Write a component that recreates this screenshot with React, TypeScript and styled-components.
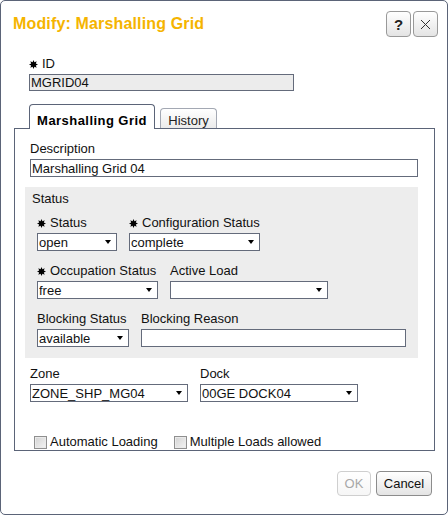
import React from "react";
import styled, { createGlobalStyle, css } from "styled-components";

const Global = createGlobalStyle`
  html, body { margin: 0; padding: 0; background: #ffffff; }
  body { font-family: "Liberation Sans", Arial, sans-serif; font-size: 13px; color: #111; }
  * { box-sizing: border-box; }
`;

const Dialog = styled.div`
  width: 448px;
  height: 515px;
  border: 1px solid #5b6478;
  border-radius: 5px;
  background: #fff;
  display: flex;
  flex-direction: column;
`;

const Header = styled.div`
  display: flex;
  align-items: center;
  justify-content: space-between;
  padding: 10px 9px 0 12px;
`;

const Title = styled.h1`
  margin: 0;
  font-size: 16px;
  letter-spacing: 0.15px;
  line-height: 18px;
  font-weight: bold;
  color: #f5b400;
`;

const HeaderButtons = styled.div`
  display: flex;
  gap: 2px;
`;

const IconButton = styled.button`
  width: 25px;
  height: 26px;
  padding: 0;
  border: 1px solid #999;
  border-radius: 4px;
  background: linear-gradient(#ffffff, #e4e4e4);
  display: flex;
  align-items: center;
  justify-content: center;
  font-family: "Liberation Sans", Arial, sans-serif;
  font-size: 15px;
  font-weight: bold;
  color: #222;
`;

const Content = styled.div`
  display: flex;
  flex-direction: column;
  padding: 0 12px 0 13px;
`;

const IdField = styled.div`
  margin-top: 19px;
  padding-left: 15px;
  display: flex;
  flex-direction: column;
`;

const Field = styled.div<{ $indent?: number }>`
  display: flex;
  flex-direction: column;
  margin-left: ${(p) => p.$indent ?? 0}px;
`;

const Label = styled.label`
  display: flex;
  align-items: center;
  font-size: 13px;
  line-height: 16px;
  height: 16px;
  margin-bottom: 2px;
  color: #111;
  white-space: nowrap;
`;

const StarIcon = styled.svg`
  width: 9px;
  height: 9px;
  margin-right: 4px;
  flex: none;
`;

const TextInput = styled.input<{ $w: number; $h?: number; $gray?: boolean }>`
  width: ${(p) => p.$w}px;
  height: ${(p) => p.$h ?? 18}px;
  border: 1px solid #646b7b;
  border-radius: 0;
  padding: 0 1px;
  margin: 0;
  font-family: "Liberation Sans", Arial, sans-serif;
  font-size: 13px;
  color: #111;
  background: ${(p) => (p.$gray ? "#ececec" : "#fff")};
  outline: none;
`;

const SelectBox = styled.span<{ $w: number }>`
  position: relative;
  display: block;
  width: ${(p) => p.$w}px;
  height: 18px;
  &::after {
    content: "";
    position: absolute;
    right: 6px;
    top: 7px;
    border-left: 3.5px solid transparent;
    border-right: 3.5px solid transparent;
    border-top: 4px solid #000;
    pointer-events: none;
  }
`;

const Select = styled.select`
  appearance: none;
  -webkit-appearance: none;
  width: 100%;
  height: 18px;
  border: 1px solid #646b7b;
  border-radius: 0;
  background: #fff;
  padding: 0 16px 0 1px;
  margin: 0;
  font-family: "Liberation Sans", Arial, sans-serif;
  font-size: 13px;
  color: #111;
  outline: none;
`;

const TabList = styled.div`
  margin-top: 13px;
  margin-bottom: -1px;
  padding-left: 15px;
  display: flex;
  align-items: flex-end;
  gap: 5px;
`;

const Tab = styled.div<{ $active?: boolean }>`
  position: relative;
  z-index: 1;
  border: 1px solid #5b6478;
  border-bottom: none;
  border-radius: 4px 4px 0 0;
  text-align: center;
  font-size: 13px;
  line-height: 15px;
  ${(p) =>
    p.$active
      ? css`
          width: 126px;
          height: 25px;
          padding-top: 8px;
          background: #fff;
          font-weight: bold;
          letter-spacing: 0.45px;
          color: #000;
        `
      : css`
          width: 57px;
          height: 20px;
          padding-top: 4px;
          margin-bottom: 1px;
          border-color: #a3a8b3;
          background: linear-gradient(#ffffff, #ebebeb);
          color: #222;
        `}
`;

const Panel = styled.div`
  border: 1px solid #5b6478;
  padding: 12px 16px 0 10px;
  display: flex;
  flex-direction: column;
`;

const StatusGroup = styled.div`
  margin-top: 10px;
  background: #ededed;
  padding: 4px 0 11px 12px;
  display: flex;
  flex-direction: column;
  gap: 12px;
`;

const GroupTitle = styled.div`
  font-size: 13px;
  line-height: 16px;
  margin-left: -5px;
  margin-bottom: -4px;
  color: #111;
`;

const Row = styled.div<{ $indent?: number; $top?: number }>`
  display: flex;
  gap: 12px;
  margin-left: ${(p) => p.$indent ?? 0}px;
  margin-top: ${(p) => p.$top ?? 0}px;
`;

const CheckRow = styled.div`
  display: flex;
  align-items: center;
  margin: 32px 0 0 9px;
  height: 16px;
  gap: 16px;
`;

const CheckLabel = styled.label`
  display: flex;
  align-items: center;
  gap: 3px;
  font-size: 13px;
  line-height: 16px;
  color: #111;
`;

const CheckBox = styled.span`
  width: 13px;
  height: 13px;
  border: 1px solid #8f8f8f;
  background: linear-gradient(135deg, #d2d2d2, #f4f4f4);
  box-shadow: inset 0 0 0 1px #eaeaea;
`;

const Footer = styled.div`
  display: flex;
  justify-content: flex-end;
  gap: 5px;
  margin-top: 20px;
  padding: 0 3px 0 0;
`;

const FooterButton = styled.button<{ $disabled?: boolean; $w: number }>`
  width: ${(p) => p.$w}px;
  height: 25px;
  padding: 0;
  border-radius: 4px;
  font-family: "Liberation Sans", Arial, sans-serif;
  font-size: 13px;
  border: 1px solid ${(p) => (p.$disabled ? "#cfcfcf" : "#8c8c8c")};
  color: ${(p) => (p.$disabled ? "#a8a8a8" : "#111")};
  background: ${(p) =>
    p.$disabled ? "linear-gradient(#ffffff, #f6f6f6)" : "linear-gradient(#ffffff, #e4e4e4)"};
`;

const starPoints = (() => {
  const pts: string[] = [];
  for (let i = 0; i < 16; i++) {
    const a = (i * Math.PI) / 8 - Math.PI / 2;
    const r = i % 2 === 0 ? 4.5 : 2.5;
    pts.push(`${(4.5 + r * Math.cos(a)).toFixed(2)},${(4.5 + r * Math.sin(a)).toFixed(2)}`);
  }
  return pts.join(" ");
})();

const Star = () => (
  <StarIcon viewBox="0 0 9 9">
    <polygon points={starPoints} fill="#000" />
  </StarIcon>
);

const FieldLabel = ({ children, required }: { children: React.ReactNode; required?: boolean }) => (
  <Label>
    {required && <Star />}
    {children}
  </Label>
);

const SelectField = ({
  label,
  value,
  width,
  required,
}: {
  label: string;
  value: string;
  width: number;
  required?: boolean;
}) => (
  <Field>
    <FieldLabel required={required}>{label}</FieldLabel>
    <SelectBox $w={width}>
      <Select defaultValue={value}>
        <option value={value}>{value}</option>
      </Select>
    </SelectBox>
  </Field>
);

export default function App() {
  return (
    <>
      <Global />
      <Dialog>
        <Header>
          <Title>Modify: Marshalling Grid</Title>
          <HeaderButtons>
            <IconButton>?</IconButton>
            <IconButton>
              <svg width="11" height="11" viewBox="0 0 11 11">
                <path d="M1 1 L10 10 M10 1 L1 10" stroke="#333" strokeWidth="1" />
              </svg>
            </IconButton>
          </HeaderButtons>
        </Header>
        <Content>
          <IdField>
            <FieldLabel required>ID</FieldLabel>
            <TextInput $w={265} $h={17} $gray readOnly value="MGRID04" />
          </IdField>
          <TabList>
            <Tab $active>Marshalling Grid</Tab>
            <Tab>History</Tab>
          </TabList>
          <Panel>
            <Field $indent={5}>
              <FieldLabel>Description</FieldLabel>
              <TextInput $w={388} readOnly value="Marshalling Grid 04" />
            </Field>
            <StatusGroup>
              <GroupTitle>Status</GroupTitle>
              <Row>
                <SelectField required label="Status" value="open" width={80} />
                <SelectField required label="Configuration Status" value="complete" width={131} />
              </Row>
              <Row>
                <SelectField required label="Occupation Status" value="free" width={121} />
                <SelectField label="Active Load" value="" width={158} />
              </Row>
              <Row>
                <SelectField label="Blocking Status" value="available" width={92} />
                <Field>
                  <FieldLabel>Blocking Reason</FieldLabel>
                  <TextInput $w={265} readOnly value="" />
                </Field>
              </Row>
            </StatusGroup>
            <Row $indent={5} $top={8}>
              <SelectField label="Zone" value="ZONE_SHP_MG04" width={158} />
              <SelectField label="Dock" value="00GE DOCK04" width={158} />
            </Row>
            <CheckRow>
              <CheckLabel>
                <CheckBox />
                Automatic Loading
              </CheckLabel>
              <CheckLabel>
                <CheckBox />
                Multiple Loads allowed
              </CheckLabel>
            </CheckRow>
          </Panel>
          <Footer>
            <FooterButton $w={34} $disabled disabled>
              OK
            </FooterButton>
            <FooterButton $w={56}>Cancel</FooterButton>
          </Footer>
        </Content>
      </Dialog>
    </>
  );
}
